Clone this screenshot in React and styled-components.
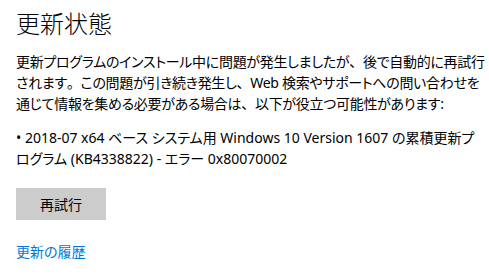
import React from "react";
import styled, { createGlobalStyle } from "styled-components";

const GlobalStyle = createGlobalStyle`
  html, body {
    margin: 0;
    padding: 0;
    background: #ffffff;
  }
  body {
    font-family: "Noto Sans", "Noto Sans CJK JP", sans-serif;
    color: #000000;
  }
`;

const Page = styled.div`
  padding: 7px 16px 0 16px;
  width: 489px;
  height: 278px;
  box-sizing: border-box;
  overflow: hidden;
`;

const Title = styled.h1`
  margin: 0;
  font-size: 24px;
  line-height: 32px;
  font-weight: 200;
  font-family: "Noto Sans CJK JP", sans-serif;
  color: #000000;
`;

const Message = styled.p`
  margin: ${props => props.top}px 0 0 0;
  font-size: 14px;
  line-height: 21px;
  font-weight: 400;
  letter-spacing: ${props => props.tight ? "-0.3px" : "0"};
  white-space: nowrap;
  font-feature-settings: "palt";
`;

/* 句読点は全角幅のまま */
const Punct = styled.span`
  font-feature-settings: normal;
`;

const RetryButton = styled.button`
  display: flex;
  align-items: center;
  justify-content: center;
  margin-top: 19px;
  width: 90px;
  height: 32px;
  padding: 0;
  border: none;
  background: #cccccc;
  color: #000000;
  font-family: "Noto Sans CJK JP", sans-serif;
  font-size: 14px;
  cursor: pointer;
`;

const HistoryLink = styled.a`
  display: block;
  margin-top: 21px;
  font-size: 14px;
  line-height: 21px;
  color: #0078d7;
  text-decoration: none;
  font-family: "Noto Sans CJK JP", sans-serif;
  font-feature-settings: "palt";
`;

export default function App() {
  return (
    <>
      <GlobalStyle />
      <Page>
        <Title>更新状態</Title>
        <Message top={12} tight>
          更新プログラムのインストール中に問題が発生しましたが<Punct>、</Punct>後で自動的に再試行
          <br />
          されます<Punct>。</Punct>この問題が引き続き発生し<Punct>、</Punct>Web 検索やサポートへの問い合わせを
          <br />
          通じて情報を集める必要がある場合は<Punct>、</Punct>以下が役立つ可能性があります:
        </Message>
        <Message top={13}>
          • 2018-07 x64 ベース システム用 Windows 10 Version 1607 の累積更新プ
          <br />
          ログラム (KB4338822) - エラー 0x80070002
        </Message>
        <RetryButton>再試行</RetryButton>
        <HistoryLink href="#">更新の履歴</HistoryLink>
      </Page>
    </>
  );
}
